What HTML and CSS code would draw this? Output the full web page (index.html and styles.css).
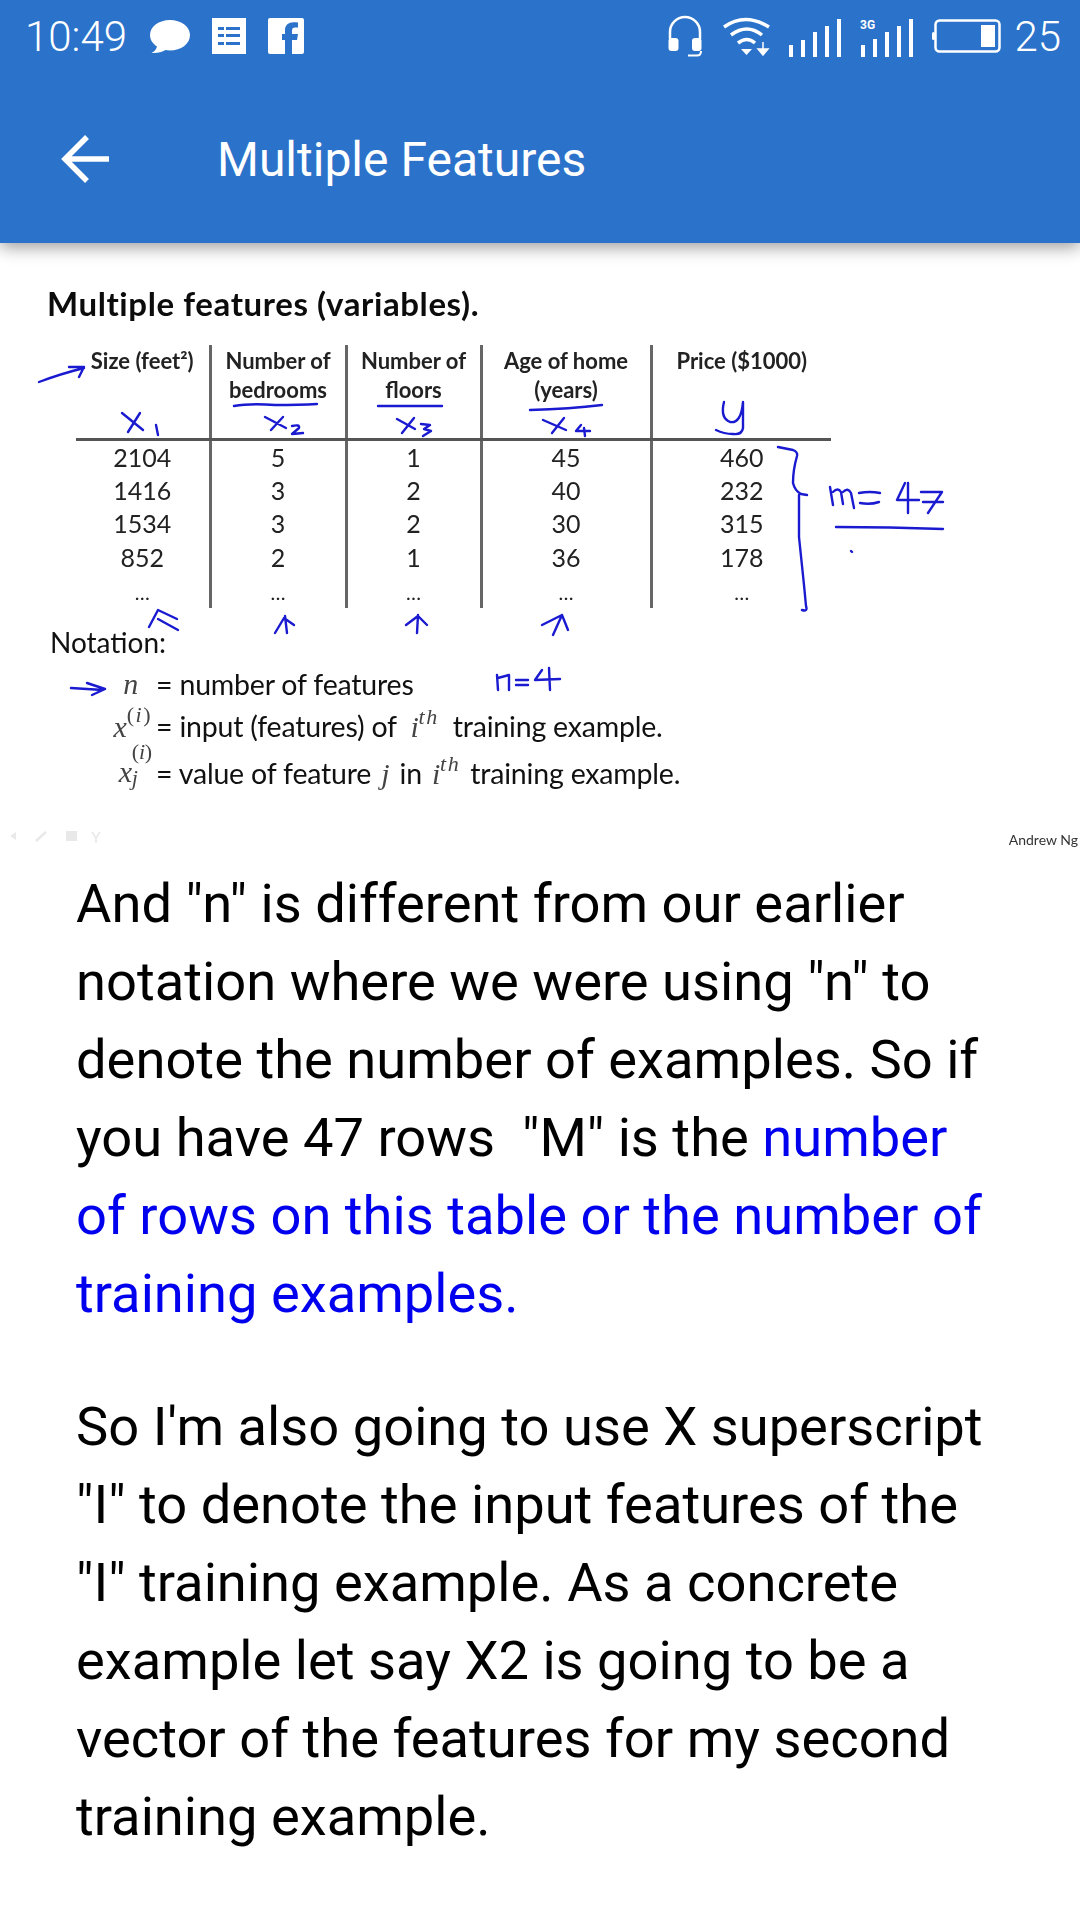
FILE: index.html
```html
<!DOCTYPE html>
<html lang="en">
<head>
    <meta charset="UTF-8">
    <meta name="viewport" content="width=device-width, initial-scale=1.0">
    <title>Multiple Features</title>
    <link rel="stylesheet" href="styles.css">
</head>
<body>

    <header class="AppBar">

        <div class="Status">
            <span class="Time">10:49</span>

            <svg class="Chat" width="40" height="35" viewBox="0 0 40 35">
                <path d="M20 1C9 1 0 7.500 0 16C0 21 3 25 7 27.500C6.500 30 4.500 32.500 1.500 34C7 34.500 12 33 15.500 31C17 31.300 18.500 31.500 20 31.500C31 31.500 40 25 40 16C40 7.500 31 1 20 1Z" fill="#fff"/>
            </svg>

            <svg class="List" width="34" height="36" viewBox="0 0 34 36">
                <path fill-rule="evenodd" fill="#fff" d="M0 0H34V36H0ZM6 9V12H12V9ZM14 9V12H28V9ZM6 16V19H12V16ZM14 16V19H28V16ZM6 24V27H12V24ZM14 24V27H28V24Z"/>
            </svg>

            <svg class="Fb" width="36" height="36" viewBox="0 0 36 36">
                <path fill-rule="evenodd" fill="#fff" d="M2 0H34Q36 0 36 2V34Q36 36 34 36H24V22H29L30 16H24V12.500C24 10.500 25 9.500 27 9.500H30V4.500C28.500 4.300 27 4.200 25.500 4.200C20.500 4.200 17 7 17 12V16H14V22H17V36H2Q0 36 0 34V2Q0 0 2 0Z"/>
            </svg>

            <div class="Right">
                <svg class="Phones" width="34" height="42" viewBox="0 0 34 42">
                    <path d="M2 24V17A15 15 0 0 1 32 17V24" fill="none" stroke="#fff" stroke-width="2.500"/>
                    <rect x="0.500" y="23" width="10" height="13" rx="3" fill="#fff"/>
                    <rect x="24" y="23" width="9.500" height="13" rx="3" fill="#fff"/>
                    <path d="M20 40.500H29Q33 40.500 33 36" fill="none" stroke="#fff" stroke-width="2"/>
                </svg>

                <svg width="47" height="40" viewBox="0 0 47 40">
                    <path d="M1 11Q22 -4 46 11" fill="none" stroke="#fff" stroke-width="3.500"/>
                    <path d="M8 19Q24 7 39 19" fill="none" stroke="#fff" stroke-width="3.500"/>
                    <path d="M15 27Q24 20 32 27" fill="none" stroke="#fff" stroke-width="3.500"/>
                    <path d="M18 33H29L23.500 39Z" fill="#fff"/>
                    <path d="M40 26V33M35 33H45L40 39Z" fill="#fff" stroke="#fff" stroke-width="1.500"/>
                </svg>

                <svg class="Bars" width="52" height="38" viewBox="0 0 52 38">
                    <path d="M2 38V26M14 38V21M26 38V13M38 38V7M50 38V0" fill="none" stroke="#fff" stroke-width="4"/>
                </svg>

                <svg class="Bars" width="53" height="38" viewBox="0 0 53 38">
                    <text class="Net" x="0" y="10">3G</text>
                    <path d="M3 38V26M15 38V20M27 38V13M39 38V7M51 38V0" fill="none" stroke="#fff" stroke-width="4"/>
                </svg>

                <svg width="69" height="34" viewBox="0 0 69 34">
                    <rect x="3.500" y="1.500" width="64" height="31" rx="4" fill="none" stroke="#fff" stroke-width="2.500"/>
                    <rect x="0" y="13" width="3" height="8" rx="1.500" fill="#fff"/>
                    <rect x="49" y="6" width="14" height="22" fill="#fff"/>
                </svg>

                <span class="Level">25</span>
            </div>
        </div>

        <div class="Toolbar">
            <svg class="Back" width="50" height="50" viewBox="0 0 50 50">
                <path d="M49 25H5M27 3L5 25L27 47" fill="none" stroke="#fff" stroke-width="5.500"/>
            </svg>
            <h1>Multiple Features</h1>
        </div>

    </header>

    <section class="Slide">

        <h2>Multiple features (variables).</h2>

        <table class="Houses">
            <thead>
                <tr>
                    <th>Size (feet²)</th>
                    <th>Number of<br>bedrooms</th>
                    <th>Number of<br>floors</th>
                    <th>Age of home<br>(years)</th>
                    <th>Price ($1000)</th>
                </tr>
            </thead>
            <tbody>
                <tr><td>2104</td><td>5</td><td>1</td><td>45</td><td>460</td></tr>
                <tr><td>1416</td><td>3</td><td>2</td><td>40</td><td>232</td></tr>
                <tr><td>1534</td><td>3</td><td>2</td><td>30</td><td>315</td></tr>
                <tr><td>852</td><td>2</td><td>1</td><td>36</td><td>178</td></tr>
                <tr class="More"><td>…</td><td>…</td><td>…</td><td>…</td><td>…</td></tr>
            </tbody>
        </table>

        <p class="Notation">Notation:</p>

        <div class="Def">
            <span class="Math Single"><i>n</i></span>
            <span>= number of features</span>
        </div>
        <div class="Def">
            <span class="Math"><i>x</i><sup>(<i>i</i>)</sup></span>
            <span>= input (features) of <i class="Th">i<sup>th</sup></i> training example.</span>
        </div>
        <div class="Def">
            <span class="Math"><i>x</i><span class="Stack"><span>(<i>i</i>)</span><i>j</i></span></span>
            <span>= value of feature <i class="Th Tight">j</i> in <i class="Th Tight">i<sup>th</sup></i> training example.</span>
        </div>

        <p class="Credit">Andrew Ng</p>

        <div class="Tools">
            <svg width="100" height="14" viewBox="0 0 100 14">
                <path d="M2 7L8 3V11ZM8 7H14" fill="#e9e9e9"/>
                <path d="M28 12L38 3" stroke="#e9e9e9" stroke-width="2.500"/>
                <rect x="58" y="2" width="11" height="10" fill="#e9e9e9"/>
                <path d="M84 3L88 9L92 3M88 9V14" fill="none" stroke="#ececec" stroke-width="2"/>
            </svg>
        </div>

        <svg class="Ink" viewBox="0 243 1080 622" width="1080" height="622">
            <g fill="none" stroke="#1a1ad0" stroke-width="2.400" stroke-linecap="round" stroke-linejoin="round">
                <path d="M39 382Q60 374 84 368M69 367L84 367L79 377"/>
                <path d="M122 413L143 430M140 413L128 432M156 425L158 435"/>
                <path d="M234 406Q250 403 275 405Q300 405 317 404"/>
                <path d="M265 417L286 428M283 417L271 430M292 426Q300 424 299 428L292 434L303 433"/>
                <path d="M378 406L442 406"/>
                <path d="M397 419L415 429M414 418L402 433M421 424L430 425L424 429L431 431L423 436"/>
                <path d="M530 410Q570 409 602 405"/>
                <path d="M543 420L566 430M564 418L552 433M581 425L576 431L590 431M584 428L585 436"/>
                <path d="M724 402Q720 418 730 422Q741 424 743 402M743 402V428Q742 435 733 434Q724 434 716 430"/>
                <path d="M778 447L793 450Q798 452 797 456Q793 470 793 483Q795 491 801 494L807 495M799 495V537L804 585L806 606Q808 612 802 610"/>
                <path d="M830 487L833 505M833 492Q838 487 841 492L843 504M843 492Q848 487 851 493L854 508"/>
                <path d="M859 493Q870 491 880 493M860 503Q870 505 879 502"/>
                <path d="M905 483L897 500L919 500M908 483V513"/>
                <path d="M921 492L942 492L928 513M923 502L943 502"/>
                <path d="M836 527Q890 527 943 529"/>
                <path d="M851 551L852 552"/>
                <path d="M149 627L158 610L177 619M158 619L178 630"/>
                <path d="M285 616L287 633M275 633L284 618L294 625"/>
                <path d="M418 615L417 633M406 625L418 616L427 625"/>
                <path d="M562 615L553 635M542 625L562 615L568 630"/>
                <path d="M71 688L103 690M87 683L105 689L92 695"/>
                <path d="M497 675L498 690M498 678L509 675L509 690"/>
                <path d="M516 680L528 680M516 685L528 685"/>
                <path d="M542 670L535 680L560 679M549 668L550 690"/>
            </g>
        </svg>

    </section>

    <article class="Text">
        <p>And "n" is different from our earlier notation where we were using "n" to denote the number of examples. So if you have 47 rows &nbsp;"M" is the <a href="#">number of rows on this table or the number of training examples.</a></p>
        <p>So I'm also going to use X superscript "I" to denote the input features of the "I" training example. As a concrete example let say X2 is going to be a vector of the features for my second training example.</p>
    </article>

</body>
</html>
```

FILE: styles.css
```css
body {
    margin: 0;
    background: #fff;
    font-family: Roboto, sans-serif;
    overflow: hidden;
}

/* blue bar */

.AppBar {
    height: 243px;
    background: #2b72ca;
    box-shadow: 0 4px 16px rgba(0, 0, 0, 0.4);
    color: #fff;
    position: relative;
}

.Status {
    display: flex;
    align-items: center;
    height: 72px;
    padding: 0 19px 0 25px;
}

.Time, .Level {
    font-size: 42px;
    font-weight: 300;
}

.Chat {
    margin-left: 23px;
}

.List {
    margin-left: 22px;
}

.Fb {
    margin-left: 22px;
}

.Right {
    display: flex;
    align-items: center;
    gap: 19px;
    margin-left: auto;
}

.Phones {
    margin-right: 2px;
}

.Level {
    margin-left: -6px;
}

.Bars {
    margin-top: 3px;
}

.Net {
    font: bold 12px Roboto, sans-serif;
    fill: #fff;
}

.Toolbar {
    display: flex;
    align-items: center;
    height: 171px;
    padding: 3px 0 0 60px;
    box-sizing: border-box;
}

.Back {
    flex: none;
}

.Toolbar h1 {
    margin: 0 0 0 107px;
    font-size: 48px;
    font-weight: 400;
}

/* lecture slide */

.Slide {
    position: relative;
    height: 622px;
    box-sizing: border-box;
    padding-top: 42px;
    font-family: Lato, sans-serif;
    color: #222;
    overflow: hidden;
    filter: blur(0.4px);
}

.Slide h2 {
    margin: 0 0 24px 47px;
    font-size: 33px;
    line-height: 36px;
    font-weight: 700;
    color: #0c0c0c;
    letter-spacing: 0.6px;
}

.Houses {
    margin-left: 76px;
    width: 755px;
    table-layout: fixed;
    border-collapse: collapse;
    text-align: center;
}

.Houses th {
    box-sizing: border-box;
}

.Houses th:nth-child(1) { width: 134px; }
.Houses th:nth-child(2) { width: 136px; }
.Houses th:nth-child(3) { width: 135px; }
.Houses th:nth-child(4) { width: 170px; }
.Houses th:nth-child(5) { width: 180px; }

.Houses th {
    height: 94px;
    padding: 1px 0 0;
    vertical-align: top;
    font-size: 22px;
    line-height: 29px;
    font-weight: 700;
    border-bottom: 3px solid #555;
}

.Houses td {
    height: 33.400px;
    padding: 0;
    font-size: 25px;
    line-height: 33px;
}

.Houses th, .Houses td {
    border-right: 3px solid #666;
}

.Houses th:last-child, .Houses td:last-child {
    border-right: none;
}

.Houses .More td {
    height: 34px;
    padding-bottom: 6px;
    box-sizing: border-box;
    font-size: 20px;
    line-height: 20px;
    vertical-align: bottom;
}

.Notation {
    margin: 19px 0 6px 50px;
    font-size: 28px;
    line-height: 30px;
    color: #111;
}

.Def {
    display: flex;
    align-items: center;
    height: 41px;
    padding-left: 106px;
    font-size: 28.500px;
    color: #111;
    letter-spacing: -0.2px;
    white-space: nowrap;
}

.Def + .Def {
    margin-top: 2px;
}

.Def + .Def + .Def {
    margin-top: 6px;
}

.Math {
    display: flex;
    align-items: flex-start;
    justify-content: flex-end;
    width: 46px;
    margin-right: 4px;
    font-family: "Liberation Serif", serif;
    color: #444;
    font-size: 30px;
    line-height: 32px;
}

.Math.Single {
    padding-right: 14px;
    width: 32px;
}

.Math sup, .Th sup {
    font-size: 22px;
    line-height: 16px;
    vertical-align: top;
    letter-spacing: 1.500px;
}

.Math sup {
    margin-top: -4px;
}

.Th {
    font-family: "Liberation Serif", serif;
    color: #444;
    font-size: 30px;
    padding: 0 7px;
}

.Th.Tight {
    padding: 0 3px;
}

.Stack {
    display: flex;
    flex-direction: column;
    font-size: 22px;
    line-height: 26px;
    margin-top: -17px;
}

.Credit {
    position: absolute;
    right: 2px;
    bottom: 17px;
    margin: 0;
    font-size: 14px;
    color: #333;
}

.Tools {
    position: absolute;
    left: 8px;
    bottom: 22px;
    line-height: 0;
}

.Ink {
    position: absolute;
    left: 0;
    top: 0;
}

/* transcript */

.Text {
    padding: 0 75px 0 76px;
}

.Text p {
    margin: 0 0 55px;
    font-size: 54.300px;
    line-height: 78px;
    color: #000;
}

.Text a {
    color: #0000ee;
    text-decoration: none;
}
```
